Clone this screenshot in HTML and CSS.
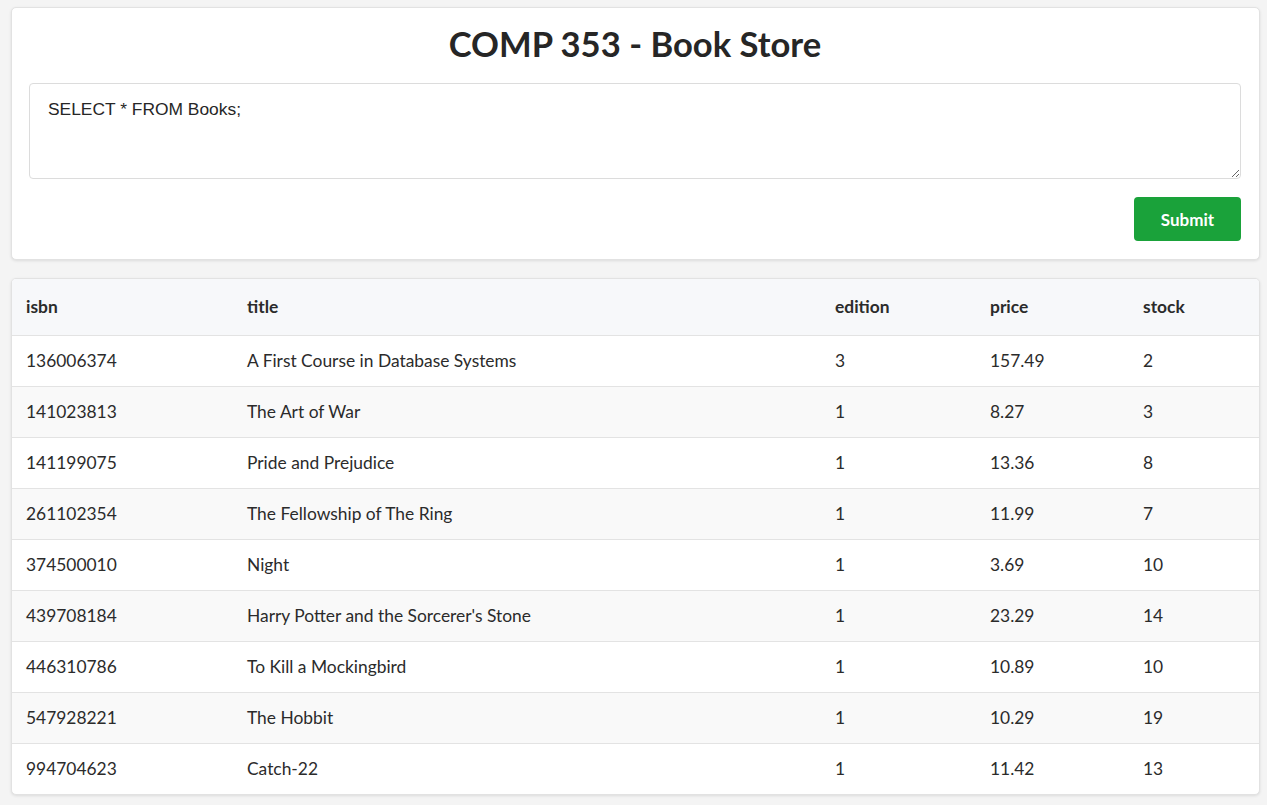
FILE: index.html
```html
<!DOCTYPE html>
<html>
<head>
<meta charset="utf-8">
<link rel="stylesheet" href="styles.css">
</head>
<body>
<div class="page">
  <section class="card query-card">
    <h1 class="title">COMP 353 - Book Store</h1>
    <textarea class="query">SELECT * FROM Books;</textarea>
    <div class="actions"><button class="submit">Submit</button></div>
  </section>
  <section class="card table-card">
    <table class="results">
      <thead>
        <tr><th class="c-isbn">isbn</th><th class="c-title">title</th><th class="c-ed">edition</th><th class="c-price">price</th><th>stock</th></tr>
      </thead>
      <tbody>
        <tr><td>136006374</td><td>A First Course in Database Systems</td><td>3</td><td>157.49</td><td>2</td></tr>
        <tr><td>141023813</td><td>The Art of War</td><td>1</td><td>8.27</td><td>3</td></tr>
        <tr><td>141199075</td><td>Pride and Prejudice</td><td>1</td><td>13.36</td><td>8</td></tr>
        <tr><td>261102354</td><td>The Fellowship of The Ring</td><td>1</td><td>11.99</td><td>7</td></tr>
        <tr><td>374500010</td><td>Night</td><td>1</td><td>3.69</td><td>10</td></tr>
        <tr><td>439708184</td><td>Harry Potter and the Sorcerer's Stone</td><td>1</td><td>23.29</td><td>14</td></tr>
        <tr><td>446310786</td><td>To Kill a Mockingbird</td><td>1</td><td>10.89</td><td>10</td></tr>
        <tr><td>547928221</td><td>The Hobbit</td><td>1</td><td>10.29</td><td>19</td></tr>
        <tr><td>994704623</td><td>Catch-22</td><td>1</td><td>11.42</td><td>13</td></tr>
      </tbody>
    </table>
  </section>
</div>
</body>
</html>
```
FILE: styles.css
```css
html, body {
  margin: 0;
  padding: 0;
  background: #f4f4f4;
  font-family: Lato, "Noto Sans", sans-serif;
  color: #2b2b2b;
}
.page {
  padding: 7px 7px 10px 11px;
  display: flex;
  flex-direction: column;
  gap: 18px;
}
.card {
  background: #fff;
  border: 1px solid #e2e2e2;
  border-radius: 5px;
  box-shadow: 0 1px 3px rgba(0,0,0,0.10);
}
.query-card {
  padding: 0 18px 18px 17px;
}
.title {
  margin: 15px 0 19px;
  text-align: center;
  font-size: 34.6px;
  font-weight: 700;
  line-height: 41px;
  color: #262626;
}
.query {
  display: block;
  box-sizing: border-box;
  width: 100%;
  height: 96px;
  margin: 0;
  padding: 15px 18px 16px;
  border: 1px solid #dcdcdc;
  border-radius: 4px;
  font-family: "Liberation Sans", Arial, sans-serif;
  font-size: 17.4px;
  color: #262626;
  resize: vertical;
}
.actions {
  display: flex;
  justify-content: flex-end;
  margin-top: 18px;
}
.submit {
  width: 107px;
  height: 44px;
  border: none;
  border-radius: 4px;
  background: #1aa23a;
  color: #fff;
  font-family: Lato, sans-serif;
  font-weight: 700;
  font-size: 17px;
}
.table-card {
  overflow: hidden;
}
.results {
  width: 100%;
  border-collapse: collapse;
  font-size: 17.4px;
}
.results th, .results td {
  text-align: left;
  padding: 0 14px 2px;
}
.results th {
  height: 54px;
  background: #f7f8fa;
  font-weight: 700;
  border-bottom: 1px solid #e3e3e3;
}
.results td {
  height: 48px;
  border-bottom: 1px solid #e3e3e3;
}
.results tbody tr:nth-child(even) td {
  background: #f9f9f9;
}
.results tbody tr:last-child td {
  border-bottom: none;
}
.c-isbn { width: 193px; }
.c-title { width: 560px; }
.c-ed { width: 127px; }
.c-price { width: 125px; }
```
